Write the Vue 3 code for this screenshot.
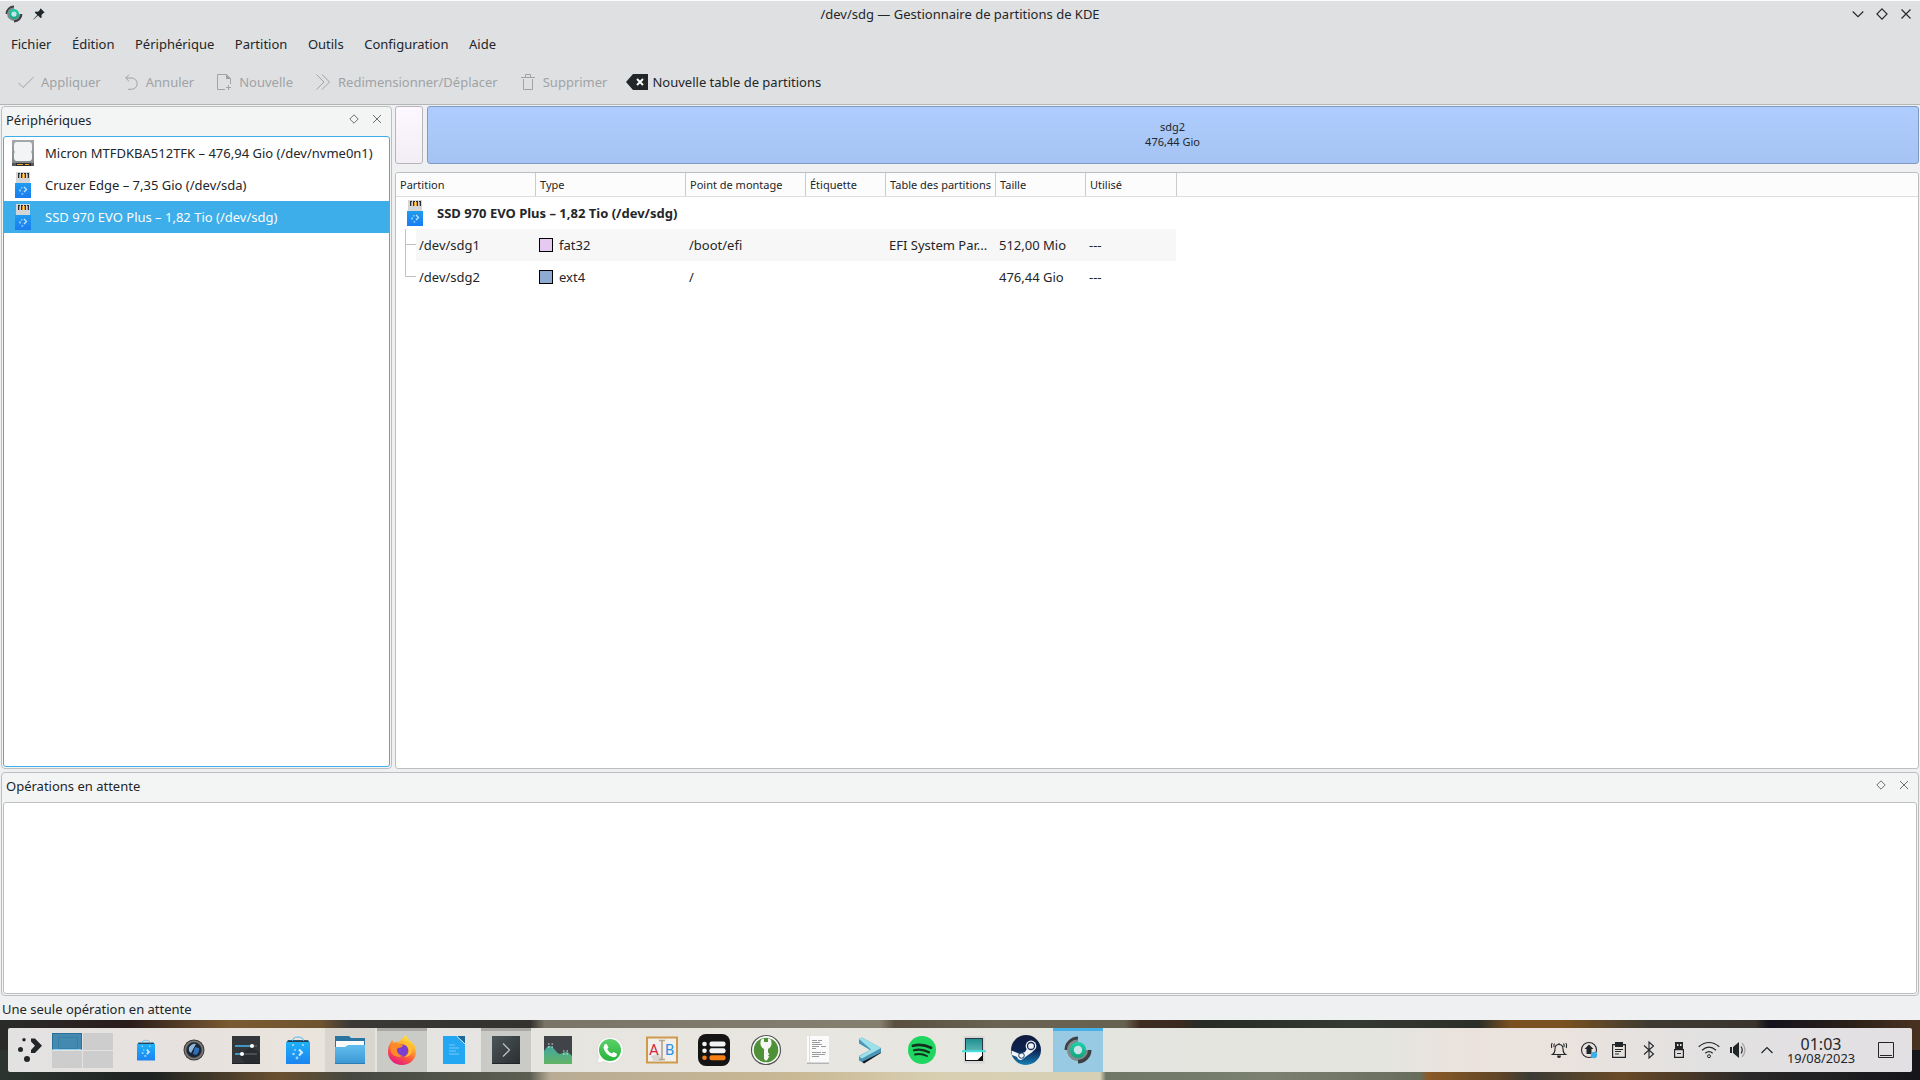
<script setup>
import { ref } from 'vue';

const menus = ['Fichier', 'Édition', 'Périphérique', 'Partition', 'Outils', 'Configuration', 'Aide'];

const tools = [
  { label: 'Appliquer', icon: 'apply', enabled: false },
  { label: 'Annuler', icon: 'undo', enabled: false },
  { label: 'Nouvelle', icon: 'new', enabled: false },
  { label: 'Redimensionner/Déplacer', icon: 'resize', enabled: false },
  { label: 'Supprimer', icon: 'trash', enabled: false },
  { label: 'Nouvelle table de partitions', icon: 'clear', enabled: true },
];

const devices = [
  { name: 'Micron MTFDKBA512TFK – 476,94 Gio (/dev/nvme0n1)', icon: 'disk' },
  { name: 'Cruzer Edge – 7,35 Gio (/dev/sda)', icon: 'usb' },
  { name: 'SSD 970 EVO Plus – 1,82 Tio (/dev/sdg)', icon: 'usb' },
];
const selected = ref(2);

const columns = ['Partition', 'Type', 'Point de montage', 'Étiquette', 'Table des partitions', 'Taille', 'Utilisé'];

const partitions = [
  { name: '/dev/sdg1', type: 'fat32', mount: '/boot/efi', label: '', table: 'EFI System Par...', size: '512,00 Mio', used: '---' },
  { name: '/dev/sdg2', type: 'ext4', mount: '/', label: '', table: '', size: '476,44 Gio', used: '---' },
];

const tasks = [
  { icon: 'sliders' },
  { icon: 'store' },
  { icon: 'folder', state: 'grouped' },
  { icon: 'firefox', state: 'open' },
  { icon: 'writer' },
  { icon: 'konsole', state: 'open' },
  { icon: 'monitor' },
  { icon: 'whatsapp' },
  { icon: 'rename' },
  { icon: 'list' },
  { icon: 'keepass' },
  { icon: 'document' },
  { icon: 'arrow' },
  { icon: 'spotify' },
  { icon: 'scanner' },
  { icon: 'steam' },
  { icon: 'kpm', state: 'active' },
];

const tray = ['bell', 'update', 'clipboard', 'bluetooth', 'usbkey', 'wifi', 'volume'];
</script>

<template>
  <div class="screen">
    <svg class="sprites" width="0" height="0">
      <defs>
        <linearGradient id="g-blue" x1="0" y1="0" x2="0" y2="1">
          <stop offset="0" stop-color="#1e9bf0" /><stop offset="1" stop-color="#1a7cf0" />
        </linearGradient>
        <linearGradient id="g-store" x1="0" y1="0" x2="0" y2="1">
          <stop offset="0" stop-color="#1fb0f8" /><stop offset="1" stop-color="#1c84f0" />
        </linearGradient>
        <linearGradient id="g-folder" x1="0" y1="0" x2="0" y2="1">
          <stop offset="0" stop-color="#62bdee" /><stop offset="1" stop-color="#3a97d4" />
        </linearGradient>
        <linearGradient id="g-ff" x1="0.8" y1="0" x2="0.3" y2="1">
          <stop offset="0" stop-color="#fff04a" /><stop offset="0.35" stop-color="#ffb02e" />
          <stop offset="0.65" stop-color="#ff5a3c" /><stop offset="1" stop-color="#e31587" />
        </linearGradient>
        <linearGradient id="g-dark" x1="0" y1="0" x2="1" y2="1">
          <stop offset="0" stop-color="#4b5558" /><stop offset="1" stop-color="#2b2f31" />
        </linearGradient>
        <linearGradient id="g-graph" x1="0" y1="0" x2="0" y2="1">
          <stop offset="0" stop-color="#41a5a0" /><stop offset="1" stop-color="#62b465" />
        </linearGradient>
        <linearGradient id="g-wa" x1="0" y1="0" x2="0" y2="1">
          <stop offset="0" stop-color="#5bd066" /><stop offset="1" stop-color="#27b43e" />
        </linearGradient>
        <linearGradient id="g-steam" x1="0" y1="0" x2="0" y2="1">
          <stop offset="0" stop-color="#0f1a3c" /><stop offset="0.5" stop-color="#0c2350" />
          <stop offset="1" stop-color="#1780b4" />
        </linearGradient>
        <linearGradient id="g-green" x1="0" y1="0" x2="0" y2="1">
          <stop offset="0" stop-color="#1fd0a8" /><stop offset="1" stop-color="#12a67c" />
        </linearGradient>
        <linearGradient id="g-scan" x1="0" y1="0" x2="0" y2="1">
          <stop offset="0" stop-color="#1f8f92" /><stop offset="1" stop-color="#5ab8b4" />
        </linearGradient>
        <linearGradient id="g-disk" x1="0" y1="0" x2="0" y2="1">
          <stop offset="0" stop-color="#a4a8aa" /><stop offset="1" stop-color="#7e8486" />
        </linearGradient>
      </defs>

      <symbol id="kpm" viewBox="0 0 32 32">
        <path d="M16 2.500A13.500 13.500 0 0 0 2.500 16H6A10 10 0 0 1 16 6z" fill="#3d4144" />
        <path d="M16 5.500A10.500 10.500 0 0 0 5 16a11 11 0 0 0 11 11z" fill="#7f8c8d" />
        <path d="M16 27a11 11 0 0 0 11-11H16z" fill="#7f8c8d" />
        <path d="M29.500 16A13.500 13.500 0 0 1 16 29.500V26a10 10 0 0 0 10-10z" fill="#3d4144" />
        <circle cx="16" cy="16" r="8" fill="url(#g-green)" />
        <circle cx="16" cy="16" r="4.200" fill="#c9e2ec" />
      </symbol>

      <symbol id="apply" viewBox="0 0 16 16">
        <path d="M.5 9l4.500 4.500L15.700 3" fill="none" stroke="currentColor" />
      </symbol>
      <symbol id="undo" viewBox="0 0 16 16">
        <path d="M6 .7L2.700 4 6 7.300M2.700 4h5.800a5.200 5.200 0 0 1 0 11.300H5" fill="none" stroke="currentColor" />
      </symbol>
      <symbol id="new" viewBox="0 0 16 16">
        <path d="M9 15.500H1.500V.5h9l4 4V10M12.500 11v5M10 13.500h5" fill="none" stroke="currentColor" />
        <path d="M10 0v5h5z" fill="currentColor" />
      </symbol>
      <symbol id="resize" viewBox="0 0 16 16">
        <path d="M1.500 .5L9 8l-7.500 7.500M7 .5L14.500 8 7 15.500" fill="none" stroke="currentColor" />
      </symbol>
      <symbol id="trash" viewBox="0 0 16 16">
        <path d="M1 3.500h14M5.500 3V.5h5V3M3.500 5v10.500h9V5" fill="none" stroke="currentColor" />
      </symbol>
      <symbol id="clear" viewBox="0 0 22 16">
        <path d="M0 8L7 0h15v16H7z" fill="#232629" />
        <path d="M11 5l6 6M17 5l-6 6" stroke="#fff" stroke-width="1.900" />
      </symbol>

      <symbol id="disk" viewBox="0 0 26 26">
        <path d="M2 0h22v26H2z" fill="url(#g-disk)" />
        <path d="M2 23h22v3H2z" fill="#55595c" />
        <path d="M6 23h15v3H6z" fill="#2a2c2e" />
        <path d="M7 24.500h6M15 24.500h4" stroke="#f5a623" stroke-width="1.200" />
        <path d="M7 2h12q3 0 3 3v5l-.7 2 .7 2v4q0 3-3 3H7q-3 0-3-3v-4l.7-2L4 10V5q0-3 3-3z" fill="#f3f4f5" />
      </symbol>
      <symbol id="usb" viewBox="0 0 26 26">
        <path d="M6 0h14v11H6z" fill="#d3d5d6" />
        <path d="M8 1h2v5H8zM11 1h2v5h-2zM14 1h2v5h-2zM17 1h2v5h-2z" fill="#2c2c2c" />
        <path d="M9 2h1v4H9zM12 2h1v4h-1zM14 2h1v4h-1zM17 2h1v4h-1z" fill="#e09a2a" />
        <path d="M5 11h16v15H5z" fill="url(#g-blue)" />
        <path d="M14 15l2.500 2.500L14 20" fill="none" stroke="#c5e3fb" stroke-width="1.300" />
        <path d="M11 15h1.500v1.500H11zM9 17.500h2v2H9zM11.500 21h1.700v1.700h-1.700z" fill="#8cc6f8" />
      </symbol>

      <symbol id="sliders" viewBox="0 0 32 32">
        <path d="M2 2h28v28H2z" fill="#33373b" />
        <path d="M22 12l8 8v10H16L9 21z" fill="#292c30" />
        <path d="M2 29h28v1H2z" fill="#1f2224" />
        <path d="M5 12h22M5 20h22" stroke="#55595c" stroke-width="1.500" />
        <path d="M5 12h16M5 20h6" stroke="#3daee9" stroke-width="1.500" />
        <circle cx="22" cy="12" r="2" fill="#fff" /><circle cx="12" cy="20" r="2" fill="#fff" />
      </symbol>
      <symbol id="store" viewBox="0 0 32 32">
        <path d="M6 6h20l2 3v3H4V9z" fill="#215d80" />
        <path d="M10.500 11V7q0-4 5.500-4t5.500 4v4" fill="none" stroke="#56b9ee" stroke-width="1" />
        <path d="M4 8h24v22H4z" fill="url(#g-store)" />
        <path d="M6 7h20v1H6z" fill="#2a3c48" />
        <circle cx="11" cy="11" r="1" fill="#bfe5fb" /><circle cx="21" cy="11" r="1" fill="#bfe5fb" />
        <path d="M17 15.500l3 3-3 3" fill="none" stroke="#d6eefd" stroke-width="2" />
        <circle cx="13" cy="16" r="1" fill="#9ed6fb" /><circle cx="11.500" cy="20" r="1.300" fill="#9ed6fb" />
        <circle cx="15" cy="24" r="1.400" fill="#9ed6fb" />
      </symbol>
      <symbol id="lens" viewBox="0 0 22 22">
        <circle cx="11" cy="11" r="10.500" fill="#38393a" />
        <circle cx="11" cy="11" r="8.700" fill="none" stroke="#7d7a76" stroke-width="1.600" />
        <circle cx="11" cy="11" r="7" fill="#17243a" />
        <path d="M6 8.500q3-4.500 7-3.500l-5 9q-3-2-2-5.500z" fill="#8fb7d8" />
        <path d="M12 8l4 1q1 4-3 7l-3-1z" fill="#2f6fb5" />
      </symbol>
      <symbol id="folder" viewBox="0 0 32 32">
        <path d="M1 2h14l2 2h14v14H1z" fill="#2b75a0" />
        <path d="M2 7h28v6H2z" fill="#fafafa" />
        <path d="M1 13h10l3-2h17v19H1z" fill="url(#g-folder)" />
        <path d="M1 29h30v1H1z" fill="#2f7eb1" />
      </symbol>
      <symbol id="firefox" viewBox="0 0 32 32">
        <path d="M20 1q1 3 3 5 7 4 7 12a14 13 0 0 1-28 0q0-6 3-10l1-2 2 3q2-2 5-1 2-3 7-7z" fill="url(#g-ff)" />
        <circle cx="16" cy="16.500" r="6.300" fill="#7b3fd0" />
        <path d="M16 10q6 0 7 6 0 5-5 7 8 0 8-8 0-5-4-7z" fill="#ffc22e" />
        <path d="M4 12q4-4 9-2l4 1q-1 3-5 3-2 1-1 3 1 4 6 5-8 3-12-4z" fill="#ff8a2a" />
      </symbol>
      <symbol id="writer" viewBox="0 0 32 32">
        <path d="M5 2h14l8 8v20H5z" fill="#23a7f2" />
        <path d="M19 2h8v8z" fill="#1b6a9c" />
        <path d="M18.500 2l8.500 8" stroke="#c4e6fa" />
        <path d="M11 11h6M11 14h10M11 17h7M11 20h10" stroke="#78c9f8" stroke-width="1.200" />
      </symbol>
      <symbol id="konsole" viewBox="0 0 32 32">
        <path d="M2 2h28v28H2z" fill="url(#g-dark)" />
        <path d="M2 29h28v1H2z" fill="#202426" />
        <path d="M13 9.500l6.500 6.500-6.500 6.500" fill="none" stroke="#b9bec0" stroke-width="1.300" />
      </symbol>
      <symbol id="monitor" viewBox="0 0 32 32">
        <path d="M2 2h28v28H2z" fill="#404348" />
        <path d="M2 17q4-6 6-5 2 0 5 4t5 4l5-2q2-1 7 4v8H2z" fill="url(#g-graph)" />
        <path d="M6 10h1.500M9.500 10H11M6 13h1.500M9.500 13H11M21 17h1.500M24.500 17H26M21 20h1.500M24.500 20H26" stroke="#d8eeec" stroke-width="1.200" />
      </symbol>
      <symbol id="whatsapp" viewBox="0 0 32 32">
        <path d="M3 29l2-6.500A13 13 0 1 1 10 27.500z" fill="#fff" stroke="#d3d3d0" stroke-width=".6" />
        <circle cx="16" cy="16" r="11" fill="url(#g-wa)" />
        <path d="M10.500 10.500l2-.8 2 3.800-1.300 1.700q1.500 3 4.600 4.300l1.700-1.600 3.500 1.800q0 3.300-3.500 3.500Q11.500 21.500 9.500 14q0-2 1-3.500z" fill="#fff" />
      </symbol>
      <symbol id="list" viewBox="0 0 32 32">
        <rect width="32" height="32" rx="8" fill="#141414" />
        <rect x="11.500" y="7.500" width="16" height="5" rx="2" fill="#f3f3f3" />
        <rect x="11.500" y="14.300" width="16" height="5" rx="2" fill="#f3f3f3" />
        <rect x="11.500" y="21.200" width="16" height="5" rx="2" fill="#f77f13" />
        <circle cx="6.500" cy="10" r="2.300" fill="#f3f3f3" /><circle cx="6.500" cy="16.800" r="2.300" fill="#f3f3f3" />
        <circle cx="6.500" cy="23.700" r="2.300" fill="#f77f13" />
      </symbol>
      <symbol id="keepass" viewBox="0 0 32 32">
        <circle cx="16" cy="16" r="14.500" fill="#fff" stroke="#545854" stroke-width="1.200" />
        <circle cx="16" cy="16" r="12.300" fill="#4f9137" />
        <path d="M11 6q-2 6 3 9v10l2 2 2-2v-1l1.500-1-1.500-1.500 1.500-1.500-1.500-1.500V15q5-3 3-9-1-2-3-1.500V8h-4V4.500Q12 4 11 6z" fill="#f5f7f4" />
      </symbol>
      <symbol id="document" viewBox="0 0 32 32">
        <path d="M5 2h22v28H5z" fill="#fbfbfb" /><path d="M7.500 2v26" stroke="#dcdcdc" />
        <path d="M5 28.500h22V30H5z" fill="#b5b5b5" />
        <path d="M10 6.500h5M16 6.500h4M10 8.500h8M10 10.500h10M10 12.500h7M19 12.500h5M10 14.500h4M10 18.500h9M20 18.500h4M10 20.500h13M10 22.500h7" stroke="#9b9b9b" />
      </symbol>
      <symbol id="arrow" viewBox="0 0 32 32">
        <path d="M7 27l3 2.500 17-10.500v-3z" fill="#101418" />
        <path d="M5 5l3-1.500L27 14v4.500L8 28l-3-1.500V22l11-6L5 9.500z" fill="#4a96b4" />
        <path d="M5 5l3-1.500L27 14 8 24.500 5 22.500 17 15.500z" fill="#9be0ea" />
      </symbol>
      <symbol id="spotify" viewBox="0 0 32 32">
        <circle cx="16" cy="16" r="14" fill="#1fd660" />
        <path d="M7 11.800q9-2.700 18 2" fill="none" stroke="#14301f" stroke-width="2.700" stroke-linecap="round" />
        <path d="M8 16.300q7.500-2 15 2" fill="none" stroke="#14301f" stroke-width="2.200" stroke-linecap="round" />
        <path d="M9 20.500q6-1.500 12 1.500" fill="none" stroke="#14301f" stroke-width="1.900" stroke-linecap="round" />
      </symbol>
      <symbol id="scanner" viewBox="0 0 32 32">
        <rect x="5.500" y="2" width="21" height="27.500" rx="1" fill="#d5d6d5" />
        <path d="M7 4h18v13H7z" fill="#2b3a40" /><path d="M8 5h16v12H8z" fill="url(#g-scan)" />
        <path d="M7 18h18v9H7z" fill="#111" /><path d="M8 18h16v3.500L19.500 26H8z" fill="#fff" />
        <path d="M4 17.200h24" stroke="#45e0dc" stroke-width="2" />
      </symbol>
      <symbol id="steam" viewBox="0 0 32 32">
        <circle cx="16" cy="16" r="15" fill="url(#g-steam)" />
        <path d="M1.500 16.500l8.500 3.600 5-2.100 3-5 5 4.500-7 5-4.500 3.500q-3.500.5-4.500-3l-5-2z" fill="#f2f4f6" />
        <circle cx="21" cy="12" r="5.400" fill="#f2f4f6" />
        <circle cx="21" cy="12" r="3.500" fill="#f2f4f6" stroke="#122a55" stroke-width="1.300" />
        <circle cx="11.500" cy="21.500" r="2.800" fill="none" stroke="#14406f" />
      </symbol>

      <symbol id="bell" viewBox="0 0 22 22">
        <path d="M4.500 15.500q2.500-1.500 2.500-5.500 0-4.500 4-4.500t4 4.500q0 4 2.500 5.500zM11 5.500V4M4.200 4Q2.700 6 3.700 9M17.800 4q1.500 2 .5 5M6.500 4.500Q5.500 6 6 8M15.500 4.500q1 1.500.5 3.500" fill="none" stroke="currentColor" stroke-width="1.100" />
        <path d="M9 16.500h4q0 2.500-2 2.500t-2-2.500z" fill="currentColor" />
      </symbol>
      <symbol id="update" viewBox="0 0 22 22">
        <circle cx="11" cy="11" r="7.500" fill="none" stroke="currentColor" stroke-width="1.100" />
        <path d="M11 5.500l4.500 4.500h-2v5h-5v-5h-2z" fill="currentColor" />
        <circle cx="16" cy="16" r="3.200" fill="#3daee9" />
      </symbol>
      <symbol id="clipboard" viewBox="0 0 22 22">
        <path d="M4.600 5.600h12.800v12.800H4.600z" fill="none" stroke="currentColor" stroke-width="1.200" />
        <path d="M7 3h8v5H7z" fill="currentColor" />
        <path d="M7 10.500h8M7 12.500h6M7 15h4" stroke="currentColor" />
      </symbol>
      <symbol id="bluetooth" viewBox="0 0 22 22">
        <path d="M6 6.500l9.500 8.500-4.500 4V3l4.500 4L6 15.500" fill="none" stroke="currentColor" stroke-width="1.100" />
      </symbol>
      <symbol id="usbkey" viewBox="0 0 22 22">
        <path d="M7 3h8v7H7z" fill="currentColor" /><path d="M9 5h1.500v2H9zM12 5h1.500v2H12z" fill="#e6e4e3" />
        <path d="M6.600 10.600h8.800v7.800H6.600z" fill="none" stroke="currentColor" stroke-width="1.200" />
        <path d="M9 14.500h4" stroke="currentColor" />
      </symbol>
      <symbol id="wifi" viewBox="0 0 22 22">
        <path d="M.7 7.700q10.300-8.400 20.600 0M4 11.200q7-6 14 0M7.300 14.200q3.700-3.300 7.400 0" fill="none" stroke="currentColor" stroke-width="1.200" />
        <circle cx="11" cy="17.200" r="1.500" fill="none" stroke="currentColor" />
      </symbol>
      <symbol id="volume" viewBox="0 0 22 22">
        <path d="M2 8h2v6H2zM5 8l6-5v16l-6-5z" fill="currentColor" />
        <path d="M13 7.500q2.500 3.500 0 7" fill="none" stroke="currentColor" stroke-width="1.200" />
        <path d="M14 4q6 7 0 14" fill="none" stroke="#aaa8a7" stroke-width="1.300" />
      </symbol>
    </svg>

    <header class="titlebar">
      <div class="title-icons">
        <svg class="app-icon"><use href="#kpm" /></svg>
        <svg class="pin" viewBox="0 0 12 12">
          <path d="M7.500 .3l4.200 4.200-1.200.4-2 2 .2 2.600-1.200.6L5 7.600 .6 11.600l-.3-.3L4.300 7 1.800 4.600l.7-1.200L5 3.700l2-2z" fill="#232629" />
        </svg>
      </div>
      <div class="title">/dev/sdg — Gestionnaire de partitions de KDE</div>
      <div class="title-buttons">
        <svg viewBox="0 0 12 12"><path d="M.7 3.500L6 8.700l5.300-5.200" /></svg>
        <svg viewBox="0 0 12 12"><path d="M6 .9L11.100 6 6 11.100.9 6z" /></svg>
        <svg viewBox="0 0 12 12"><path d="M1.500 1.500l9 9M10.500 1.500l-9 9" /></svg>
      </div>
    </header>

    <nav class="menubar">
      <div v-for="menu in menus" :key="menu">{{ menu }}</div>
    </nav>

    <div class="toolbar">
      <div v-for="tool in tools" :key="tool.icon" class="tool" :class="[tool.icon, { enabled: tool.enabled }]">
        <svg><use :href="'#' + tool.icon" /></svg>
        <span>{{ tool.label }}</span>
      </div>
    </div>

    <main class="main">
      <section class="dock devices">
        <div class="dock-title">
          <span>Périphériques</span>
          <svg viewBox="0 0 10 10"><path d="M5 .8L9.200 5 5 9.200.8 5z" /></svg>
          <svg viewBox="0 0 10 10"><path d="M1 1l8 8M9 1L1 9" /></svg>
        </div>
        <div class="dock-body focused">
          <div
            v-for="(device, i) in devices"
            :key="device.name"
            class="device"
            :class="{ selected: i === selected }"
            @click="selected = i"
          >
            <svg><use :href="'#' + device.icon" /></svg>
            <span>{{ device.name }}</span>
          </div>
        </div>
      </section>

      <section class="right">
        <div class="bars">
          <div class="bar efi"></div>
          <div class="bar root">
            <div>sdg2</div>
            <div>476,44 Gio</div>
          </div>
        </div>
        <div class="table">
          <div class="grid table-head">
            <div v-for="column in columns" :key="column">{{ column }}</div>
          </div>
          <div class="tree-root">
            <svg><use href="#usb" /></svg>
            <span>SSD 970 EVO Plus – 1,82 Tio (/dev/sdg)</span>
          </div>
          <div v-for="(part, i) in partitions" :key="part.name" class="tree-row">
            <svg class="branch" viewBox="0 0 20 32">
              <path v-if="i < partitions.length - 1" d="M9.500 0v32M9.500 15.500H20" />
              <path v-else d="M9.500 0v15.500H20" />
            </svg>
            <div class="grid cells" :class="{ odd: i === 0 }">
              <div>{{ part.name }}</div>
              <div class="type"><i :class="part.type"></i>{{ part.type }}</div>
              <div>{{ part.mount }}</div>
              <div>{{ part.label }}</div>
              <div>{{ part.table }}</div>
              <div>{{ part.size }}</div>
              <div>{{ part.used }}</div>
            </div>
          </div>
        </div>
      </section>
    </main>

    <section class="dock operations">
      <div class="dock-title">
        <span>Opérations en attente</span>
        <svg viewBox="0 0 10 10"><path d="M5 .8L9.200 5 5 9.200.8 5z" /></svg>
        <svg viewBox="0 0 10 10"><path d="M1 1l8 8M9 1L1 9" /></svg>
      </div>
      <div class="dock-body"></div>
    </section>

    <div class="statusbar">Une seule opération en attente</div>

    <footer class="desktop">
      <div class="panel">
        <svg class="launcher" viewBox="0 0 24 24">
          <path d="M13 .5h4L24 7.800 17 15h-4V12l4-4.200-4-4.200z" fill="#232629" />
          <circle cx="6" cy="1.800" r="1.700" fill="#232629" />
          <circle cx="2.500" cy="11.500" r="2.500" fill="#232629" />
          <circle cx="9" cy="21" r="3" fill="#232629" />
        </svg>
        <div class="pager">
          <div class="current"><b></b></div>
          <div></div>
          <div></div>
          <div></div>
        </div>
        <svg class="small-store"><use href="#store" /></svg>
        <svg class="lens"><use href="#lens" /></svg>
        <div class="tasks">
          <div v-for="task in tasks" :key="task.icon" class="task" :class="task.state">
            <svg v-if="task.icon === 'rename'" viewBox="0 0 32 32">
              <path d="M0 2.500h32v27H0z" fill="#cf9a4c" />
              <path d="M2 4.500h28v23H2z" fill="#f1eeeb" />
              <path d="M5 22l8-2 4 7.500H8z" fill="#d9d5d1" />
              <text class="letter" x="3" y="21" fill="#d0273f">A</text>
              <text class="letter" x="19" y="21" fill="#2795e5">B</text>
              <path d="M13 6.500h6M13 25.500h6M16 6.500v19" stroke="#b5a88f" stroke-width="1.700" />
            </svg>
            <svg v-else><use :href="'#' + task.icon" /></svg>
          </div>
        </div>
        <div class="tray">
          <svg v-for="name in tray" :key="name"><use :href="'#' + name" /></svg>
        </div>
        <svg class="caret" viewBox="0 0 12 12"><path d="M.5 9L6 3.500 11.500 9" /></svg>
        <div class="clock">
          <div class="time">01:03</div>
          <div class="date">19/08/2023</div>
        </div>
        <svg class="show-desktop" viewBox="0 0 16 16"><path d="M.5.5h15v15H.5zM2 13.500h12" /></svg>
      </div>
    </footer>
  </div>
</template>

<style>
body {
  margin: 0;
  overflow: hidden;
}
</style>

<style scoped>
.screen {
  width: 1920px;
  height: 1080px;
  box-sizing: border-box;
  display: flex;
  flex-direction: column;
  overflow: hidden;
  background: #eff0f1;
  color: #232629;
  font-family: "Noto Sans", sans-serif;
  font-size: 13px;
  line-height: 18px;
  white-space: nowrap;
}

.screen * {
  box-sizing: border-box;
}

svg {
  display: block;
  flex: none;
}

.sprites {
  position: absolute;
}

.titlebar {
  display: grid;
  grid-template-columns: 1fr auto 1fr;
  align-items: center;
  height: 28px;
  flex: none;
  padding: 0 8px 1px 4px;
  border-top: 1px solid #fcfcfc;
  background: #dee0e2;
}

.title {
  padding-left: 4px;
}

.title-icons {
  display: flex;
  align-items: center;
  gap: 9px;
}

.app-icon {
  width: 20px;
  height: 20px;
}

.pin {
  width: 12px;
  height: 12px;
}

.title-buttons {
  display: flex;
  justify-content: flex-end;
  gap: 12px;
}

.title-buttons svg {
  width: 12px;
  height: 12px;
  fill: none;
  stroke: #232629;
  stroke-width: 1.1;
}

.menubar {
  display: flex;
  gap: 20.5px;
  height: 32px;
  flex: none;
  align-items: center;
  padding-left: 11px;
  background: #dee0e2;
}

.toolbar {
  display: flex;
  align-items: center;
  height: 45px;
  flex: none;
  padding: 0 0 1px 18px;
  border-bottom: 1px solid #b3b5b7;
  background: #dee0e2;
}

.tool {
  display: flex;
  align-items: center;
  gap: 7px;
  margin-right: 22px;
  color: #a0a3a6;
}

.tool svg {
  width: 16px;
  height: 16px;
}

.tool.enabled {
  color: #232629;
  gap: 4px;
}

.tool.trash {
  margin-right: 19px;
}

.tool.clear svg {
  width: 22px;
}

.main {
  display: flex;
  gap: 3px;
  height: 665px;
  flex: none;
  padding: 1px;
}

.dock {
  display: flex;
  flex-direction: column;
  border: 1px solid #bcbebf;
  border-radius: 4px;
  background: #f3f5f5;
}

.devices {
  width: 391px;
  padding: 0 1px 1px;
}

.dock-title {
  display: flex;
  align-items: center;
  height: 29px;
  flex: none;
  padding: 0 8px 5px 3px;
}

.dock-title span {
  flex: 1;
  padding-top: 2px;
}

.dock-title svg {
  width: 10px;
  height: 10px;
  margin-left: 13px;
  fill: none;
  stroke: #6c7073;
}

.dock-body {
  flex: 1;
  border: 1px solid #bcbebf;
  border-radius: 3px;
  background: #fff;
}

.dock-body.focused {
  border-color: #3daee9;
}

.device {
  display: flex;
  align-items: center;
  gap: 9px;
  height: 32px;
  padding-left: 6px;
}

.device svg {
  width: 26px;
  height: 26px;
}

.device.selected {
  background: #3daee9;
  color: #fcfcfc;
}

.right {
  flex: 1;
  display: flex;
  flex-direction: column;
}

.bars {
  display: flex;
  gap: 4px;
  height: 58px;
  margin-bottom: 8px;
}

.bar {
  border: 1px solid #b9b4bb;
  border-radius: 3px;
}

.bar.efi {
  width: 28px;
  background: linear-gradient(#fdf8ff, #f3eef5);
}

.bar.root {
  flex: 1;
  padding: 12px 1px 0 0;
  border-color: #7e99c2;
  background: linear-gradient(#aeccfd, #a5c4f3);
  font-size: 11px;
  line-height: 15px;
  text-align: center;
}

.table {
  flex: 1;
  border: 1px solid #bcbebf;
  border-radius: 3px;
  background: #fff;
}

.grid {
  display: grid;
  grid-template-columns: 140px 150px 120px 80px 110px 90px 91px;
}

.table-head {
  height: 24px;
  border-bottom: 1px solid #dcdddd;
  border-radius: 3px 3px 0 0;
  background: #fcfcfc;
  font-size: 11px;
  line-height: 23px;
}

.table-head div {
  padding-left: 4px;
  border-right: 1px solid #cbcccd;
}

.tree-root {
  display: flex;
  align-items: center;
  gap: 9px;
  height: 32px;
  padding-left: 6px;
  font-weight: 700;
}

.tree-root svg {
  width: 26px;
  height: 26px;
}

.tree-row {
  display: flex;
  height: 32px;
}

.branch {
  width: 20px;
  height: 32px;
  fill: none;
  stroke: #bfc1c2;
}

.cells {
  grid-template-columns: 120px 150px 120px 80px 110px 90px 90px;
  line-height: 32px;
}

.cells.odd {
  background: #f7f7f7;
}

.cells div {
  padding-left: 3px;
}

.cells .type {
  display: flex;
  align-items: center;
  gap: 6px;
}

.type i {
  width: 14px;
  height: 14px;
  border: 1px solid #000;
}

.type .fat32 {
  background: #e5c9f0;
}

.type .ext4 {
  background: #8ea9d2;
}

.operations {
  height: 224px;
  flex: none;
  margin: 2px 1px 0;
  padding: 0 1px 1px;
}

.statusbar {
  height: 24px;
  flex: none;
  padding-left: 2px;
  line-height: 26px;
}

/* wallpaper showing above and below the floating panel */
.desktop {
  height: 60px;
  flex: none;
  padding: 8px;
  background:
    linear-gradient(90deg, #2a2c2a 0, #2b1c1c 130px, #7a5a30 230px, #6f5430 320px, #3a3935 350px, #33322e 530px, #7a7468 545px, #857f70 880px, #5a4f40 895px, #6b6452 1000px, #66604f 1125px, #3e2c20 1140px, #3b2a20 1180px, #272b26 1200px, #363a34 1350px, #2c2f28 1480px, #7a5020 1510px, #7a5220 1560px, #3e3a32 1650px, #3a342c 1755px, #15121c 1768px, #2a2018 1850px, #4a3220 1920px) top / 100% 50% no-repeat,
    linear-gradient(90deg, #2c3530 0, #1e2222 150px, #6a5030 280px, #454840 350px, #5c5e52 530px, #b8ab94 550px, #c9b994 800px, #d8cfb2 940px, #d8d0b6 1100px, #6f7666 1106px, #7b8070 1270px, #686c5c 1420px, #8a5a28 1428px, #5f4426 1500px, #3a3a34 1530px, #6a4a28 1620px, #2a2828 1750px, #15151a 1920px) bottom / 100% 50% no-repeat;
}

.panel {
  display: flex;
  align-items: center;
  height: 44px;
  padding-left: 10px;
  border-radius: 2px;
  background: linear-gradient(90deg, #e3e2e2 0, #e8e2df 200px, #e9e4dc 310px, #e5e4e0 430px, #e9e6e0 700px, #e4e5e0 1150px, #e4e5df 1370px, #ebe2dd 1460px, #ebe3dd 1530px, #e2e1e1 1700px, #e3e0e4 100%);
}

.launcher {
  width: 24px;
  height: 24px;
  margin-right: 10px;
}

.pager {
  display: grid;
  grid-template-columns: 30px 30px;
  grid-template-rows: 17px 17px;
  gap: 1px;
  margin-right: 21px;
}

.pager div {
  background: #cecdcd;
}

.pager .current {
  padding: 3px 3px 0 5px;
  border: 1px solid #286f99;
  border-bottom-color: #8fd0f2;
  background: #4389b0;
}

.current b {
  display: block;
  height: 12px;
  border: 1px solid #387fa6;
}

.small-store {
  width: 24px;
  height: 24px;
  margin-right: 25px;
}

.lens {
  width: 22px;
  height: 22px;
  margin-right: 16px;
}

.tasks {
  display: flex;
  gap: 2px;
}

.task {
  display: flex;
  align-items: center;
  justify-content: center;
  width: 50px;
  height: 44px;
}

.task svg {
  width: 32px;
  height: 32px;
}

.letter {
  font-family: Roboto, sans-serif;
  font-size: 15px;
}

.task.grouped {
  background: #d9d5cf;
}

.task.open {
  background: #cacac6;
  box-shadow: inset 0 3px #a8a8a5;
}

.task.active {
  background: #99cae3;
  box-shadow: inset 0 3px #49b1ea;
}

.tray {
  display: flex;
  gap: 8px;
  margin-left: auto;
}

.tray svg {
  width: 22px;
  height: 22px;
}

.caret {
  width: 12px;
  height: 12px;
  margin: 0 13px 0 11px;
  fill: none;
  stroke: #232629;
  stroke-width: 1.2;
}

.clock {
  width: 70px;
  margin-right: 22px;
  text-align: center;
}

.time {
  font-size: 16px;
  line-height: 16px;
}

.date {
  font-size: 12.8px;
  line-height: 12px;
}

.show-desktop {
  width: 16px;
  height: 16px;
  margin-right: 18px;
  fill: none;
  stroke: #232629;
}
</style>
